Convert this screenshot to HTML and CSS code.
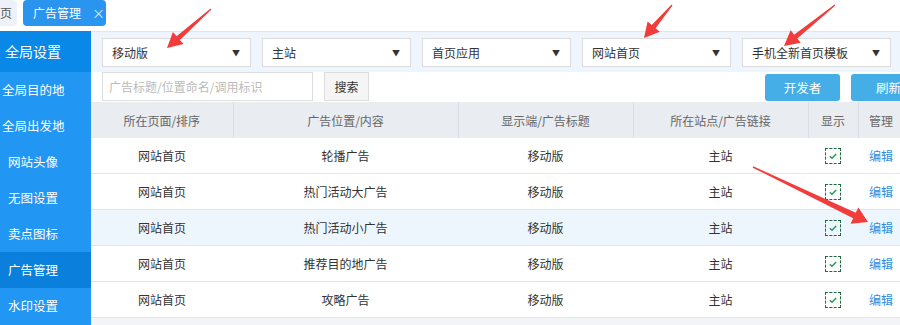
FILE: index.html
```html
<!DOCTYPE html>
<html lang="zh-CN">
<head>
<meta charset="utf-8">
<title>广告管理</title>
<link rel="stylesheet" href="styles.css">
</head>
<body>
<div class="tabs">
  <div class="tab tab-home">首页</div>
  <div class="tab tab-active">广告管理<span class="tab-close">×</span></div>
</div>
<div class="layout">
  <aside class="sidebar">
    <div class="side-title">全局设置</div>
    <div class="side-item side-item-wide">全局目的地</div>
    <div class="side-item side-item-wide">全局出发地</div>
    <div class="side-item">网站头像</div>
    <div class="side-item">无图设置</div>
    <div class="side-item">卖点图标</div>
    <div class="side-item side-item-active">广告管理</div>
    <div class="side-item">水印设置</div>
  </aside>
  <main class="main">
    <div class="filters">
      <div class="select"><span>移动版</span><span class="caret">▼</span></div>
      <div class="select"><span>主站</span><span class="caret">▼</span></div>
      <div class="select"><span>首页应用</span><span class="caret">▼</span></div>
      <div class="select"><span>网站首页</span><span class="caret">▼</span></div>
      <div class="select"><span>手机全新首页模板</span><span class="caret">▼</span></div>
    </div>
    <div class="toolbar">
      <div class="search-input">广告标题/位置命名/调用标识</div>
      <div class="btn-search">搜索</div>
      <div class="btn-primary btn-first">开发者</div>
      <div class="btn-primary">刷新</div>
    </div>
    <table class="grid">
      <colgroup>
        <col class="c1"><col class="c2"><col class="c3"><col class="c4"><col class="c5"><col class="c6">
      </colgroup>
      <thead>
        <tr><th>所在页面/排序</th><th>广告位置/内容</th><th>显示端/广告标题</th><th>所在站点/广告链接</th><th>显示</th><th>管理</th></tr>
      </thead>
      <tbody>
        <tr><td>网站首页</td><td>轮播广告</td><td>移动版</td><td>主站</td><td><span class="check"><svg viewBox="0 0 14 14" width="14" height="14"><path d="M3.8 7.2 L6 9.2 L10.2 5" fill="none" stroke="#2a9a58" stroke-width="1.5"/></svg></span></td><td><span class="link">编辑</span></td></tr>
        <tr><td>网站首页</td><td>热门活动大广告</td><td>移动版</td><td>主站</td><td><span class="check"><svg viewBox="0 0 14 14" width="14" height="14"><path d="M3.8 7.2 L6 9.2 L10.2 5" fill="none" stroke="#2a9a58" stroke-width="1.5"/></svg></span></td><td><span class="link">编辑</span></td></tr>
        <tr class="row-hover"><td>网站首页</td><td>热门活动小广告</td><td>移动版</td><td>主站</td><td><span class="check"><svg viewBox="0 0 14 14" width="14" height="14"><path d="M3.8 7.2 L6 9.2 L10.2 5" fill="none" stroke="#2a9a58" stroke-width="1.5"/></svg></span></td><td><span class="link">编辑</span></td></tr>
        <tr><td>网站首页</td><td>推荐目的地广告</td><td>移动版</td><td>主站</td><td><span class="check"><svg viewBox="0 0 14 14" width="14" height="14"><path d="M3.8 7.2 L6 9.2 L10.2 5" fill="none" stroke="#2a9a58" stroke-width="1.5"/></svg></span></td><td><span class="link">编辑</span></td></tr>
        <tr><td>网站首页</td><td>攻略广告</td><td>移动版</td><td>主站</td><td><span class="check"><svg viewBox="0 0 14 14" width="14" height="14"><path d="M3.8 7.2 L6 9.2 L10.2 5" fill="none" stroke="#2a9a58" stroke-width="1.5"/></svg></span></td><td><span class="link">编辑</span></td></tr>
      </tbody>
    </table>
  </main>
</div>
<svg class="arrows" width="900" height="325" viewBox="0 0 900 325">
  <polygon points="211.4,9.45 179.88,39.92 183.52,44.03 167,48 172.92,32.07 176.56,36.18 210.6,8.55"/>
  <polygon points="672.46,5.39 655.61,28.19 659.8,31.75 644,38 647.6,21.39 651.8,24.95 671.54,4.61"/>
  <polygon points="835.38,5.47 797.27,38.55 800.72,42.84 784,46 790.68,30.36 794.13,34.65 834.62,4.53"/>
  <polygon points="752.7,167.63 853.18,218.24 850.59,223.65 868,222 858.35,207.41 855.76,212.82 753.3,166.37"/>
</svg>
</body>
</html>
```

FILE: styles.css
```css
html, body {
  margin: 0;
  padding: 0;
}
body {
  width: 900px;
  height: 325px;
  overflow: hidden;
  position: relative;
  background: #ffffff;
  font-family: "Noto Sans CJK SC", "Noto Sans", "Liberation Sans", sans-serif;
  font-size: 12px;
  color: #333333;
}

/* tabs */
.tabs {
  height: 31px;
  display: flex;
  align-items: flex-start;
  background: #ffffff;
}
.tab {
  height: 26px;
  line-height: 26px;
  font-size: 12px;
  box-sizing: border-box;
}
.tab-home {
  margin-left: -12px;
  width: 29px;
  padding-left: 0;
  background: #eef2f8;
  color: #555555;
  border-radius: 0 4px 4px 0;
}
.tab-active {
  margin-left: 6px;
  width: 83px;
  padding-left: 10px;
  background: #2a95ee;
  color: #ffffff;
  border-radius: 4px;
  display: flex;
  align-items: center;
}
.tab-close {
  margin-left: 11px;
  font-size: 13px;
  color: #d8ecfc;
}

/* layout */
.layout {
  display: flex;
  height: 294px;
}
.sidebar {
  flex: 0 0 91px;
  background: #2196f3;
  color: #ffffff;
}
.side-title {
  height: 41px;
  line-height: 41px;
  padding-left: 5px;
  font-size: 14px;
  background: #0a88e8;
}
.side-item {
  height: 36px;
  line-height: 36px;
  padding-left: 8px;
  font-size: 12.5px;
}
.side-item-wide {
  padding-left: 2px;
}
.side-item-active {
  background: #0a7fdc;
}

.main {
  flex: 0 0 840px;
  background: #f3f4f7;
  overflow: hidden;
}

/* filters */
.filters {
  height: 41px;
  box-sizing: border-box;
  border-top: 1px solid #dbe7f4;
  background: #eef5fc;
  display: flex;
  align-items: center;
  gap: 11px;
  padding: 0 11px;
}
.select {
  width: 149px;
  height: 29px;
  box-sizing: border-box;
  border: 1px solid #dcdcdc;
  background: #ffffff;
  display: flex;
  align-items: center;
  justify-content: space-between;
  padding: 0 10px 0 9px;
  font-size: 12px;
  color: #333333;
}
.caret {
  font-size: 8px;
  color: #333333;
}

/* toolbar */
.toolbar {
  height: 30px;
  background: #ffffff;
  display: flex;
  align-items: center;
  padding: 0 5px 0 11px;
}
.search-input {
  width: 211px;
  height: 29px;
  box-sizing: border-box;
  border: 1px solid #dddddd;
  padding-left: 6px;
  line-height: 27px;
  color: #bbbbbb;
  font-size: 12px;
  align-self: flex-start;
}
.btn-search {
  margin-left: 11px;
  width: 45px;
  height: 29px;
  box-sizing: border-box;
  border: 1px solid #dddddd;
  background: #f5f5f5;
  text-align: center;
  line-height: 27px;
  font-size: 12px;
  color: #333333;
  align-self: flex-start;
}
.btn-primary {
  width: 75px;
  height: 27px;
  line-height: 27px;
  border-radius: 3px;
  background: #45aee6;
  color: #ffffff;
  text-align: center;
  font-size: 12.5px;
  margin-left: 11px;
}
.btn-first {
  margin-left: auto;
}

/* table */
.grid {
  width: 813px;
  table-layout: fixed;
  border-collapse: collapse;
  background: #ffffff;
}
.c1 { width: 142px; }
.c2 { width: 225px; }
.c3 { width: 175px; }
.c4 { width: 175px; }
.c5 { width: 50px; }
.c6 { width: 46px; }
.grid th {
  height: 36px;
  padding: 0;
  background: #e9ecf1;
  color: #666666;
  font-weight: normal;
  font-size: 12px;
  border-right: 1px solid #dcdfe5;
  text-align: center;
}
.grid td {
  height: 35px;
  padding: 0;
  text-align: center;
  font-size: 12px;
  color: #333333;
  border-bottom: 1px solid #e2e5ea;
}
.row-hover td {
  background: #eef6fd;
}
.check {
  display: inline-block;
  width: 14px;
  height: 14px;
  border: 1px dashed #1f6a3e;
  vertical-align: middle;
  position: relative;
  top: -1px;
}
.check svg {
  display: block;
}
.link {
  color: #2a8fe0;
}

/* arrows overlay */
.arrows {
  position: absolute;
  left: 0;
  top: 0;
  pointer-events: none;
}
.arrows polygon {
  fill: #f23b3b;
}
```
